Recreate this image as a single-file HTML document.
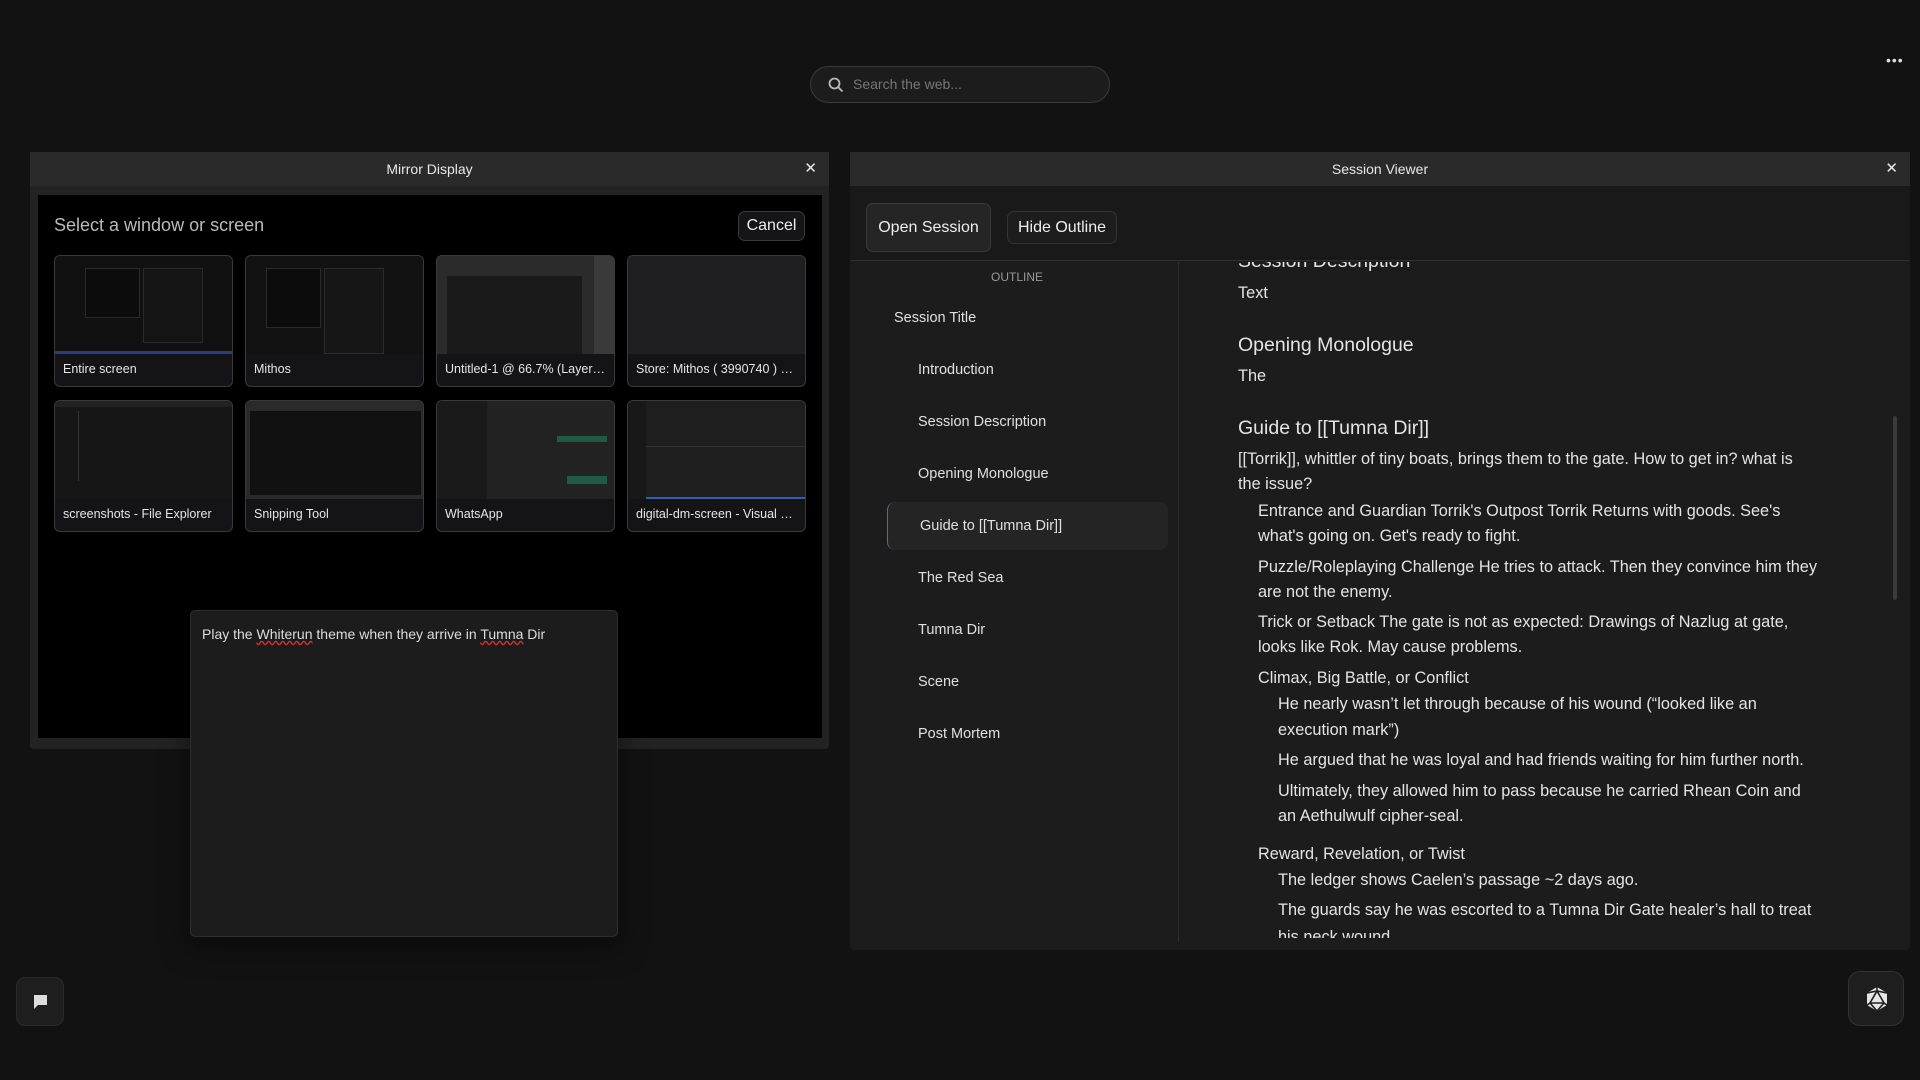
<!DOCTYPE html>
<html><head><meta charset="utf-8"><style>
*{box-sizing:border-box;margin:0;padding:0}
body{width:1920px;height:1080px;background:#121212;font-family:"Liberation Sans","NanumGothic",sans-serif;color:#ddd;position:relative;overflow:hidden}
.a{position:absolute;white-space:nowrap}
.search{left:810px;top:66px;width:300px;height:37px;border:1px solid #3a3a3a;border-radius:19px;background:#1c1c1c}
.panel{background:#1d1d1d;border-radius:4px}
.hdr{height:34px;background:#2a2a2a;text-align:center;line-height:34px;font-size:14px;color:#e8e8e8}
.thumb{position:absolute;width:179px;height:132px;border:1px solid #3a3a3a;border-radius:6px;background:#141416;overflow:hidden}
.thumb .img{position:absolute;left:0;top:0;right:0;height:98px;background:#1a1a1c}
.thumb .lbl{position:absolute;left:8px;top:106px;font-size:12.5px;color:#e6e6e6}
.ol{position:absolute;font-size:14.5px;color:#e0e0e0}
.t{position:absolute;white-space:nowrap;font-size:16.3px;color:#e4e4e4}
.h{font-size:19.5px}
</style></head><body>
<div class="a search"><svg style="position:absolute;left:17px;top:10px" width="16" height="16" viewBox="0 0 16 16"><circle cx="6.5" cy="6.5" r="5" stroke="#bbb" stroke-width="1.8" fill="none"/><path d="M10 10l4.5 4.5" stroke="#bbb" stroke-width="1.8"/></svg><span style="position:absolute;left:42px;top:9px;font-size:14px;color:#777">Search the web...</span></div>
<div class="a" style="left:1886px;top:52px;font-size:14px;color:#ddd;letter-spacing:1px">•••</div>

<div class="a panel" style="left:30px;top:152px;width:799px;height:597px;background:#232323">
<div class="hdr">Mirror Display<span style="position:absolute;right:12px;font-size:15px">✕</span></div>
<div style="position:absolute;left:8px;top:43px;width:784px;height:543px;background:#000"></div>
</div>
<div class="a" style="left:54px;top:215px;font-size:18px;color:#bbb">Select a window or screen</div>
<div class="a" style="left:738px;top:211px;width:67px;height:30px;border:1px solid #3a3a3a;border-radius:7px;background:#151518;color:#eee;font-size:16px;text-align:center;line-height:28px">Cancel</div>

<div class="thumb" style="left:54px;top:255px"><div class="img" style="background:#111"><div style="position:absolute;left:30px;top:12px;width:55px;height:50px;background:#0c0c0c;border:1px solid #2a2a2a"></div><div style="position:absolute;left:88px;top:12px;width:60px;height:75px;background:#141414;border:1px solid #2a2a2a"></div><div style="position:absolute;left:0;bottom:0;width:100%;height:3px;background:#2a3a8a"></div></div><div class="lbl">Entire screen</div></div>
<div class="thumb" style="left:245px;top:255px"><div class="img" style="background:#121212"><div style="position:absolute;left:20px;top:12px;width:55px;height:60px;background:#0c0c0c;border:1px solid #2a2a2a"></div><div style="position:absolute;left:78px;top:12px;width:60px;height:86px;background:#161616;border:1px solid #2a2a2a"></div></div><div class="lbl">Mithos</div></div>
<div class="thumb" style="left:436px;top:255px"><div class="img" style="background:#2b2b2b"><div style="position:absolute;left:10px;top:20px;width:135px;height:78px;background:#1a1a1a"></div><div style="position:absolute;right:0;top:0;width:20px;height:98px;background:#3a3a3a"></div></div><div class="lbl">Untitled-1 @ 66.7% (Layer…</div></div>
<div class="thumb" style="left:627px;top:255px"><div class="img" style="background:#1f1f22"></div><div class="lbl">Store: Mithos ( 3990740 ) …</div></div>

<div class="thumb" style="left:54px;top:400px"><div class="img" style="background:#161616"><div style="position:absolute;left:0;top:0;width:100%;height:6px;background:#222"></div><div style="position:absolute;left:2px;top:10px;width:22px;height:70px;border-right:1px solid #333"></div></div><div class="lbl">screenshots - File Explorer</div></div>
<div class="thumb" style="left:245px;top:400px"><div class="img" style="background:#2a2a2a"><div style="position:absolute;left:4px;top:10px;width:171px;height:84px;background:#111"></div></div><div class="lbl">Snipping Tool</div></div>
<div class="thumb" style="left:436px;top:400px"><div class="img" style="background:#222"><div style="position:absolute;left:0;top:0;width:50px;height:98px;background:#1a1a1a"></div><div style="position:absolute;left:120px;top:35px;width:50px;height:6px;background:#1f5a44"></div><div style="position:absolute;left:130px;top:75px;width:40px;height:8px;background:#1f5a44"></div></div><div class="lbl">WhatsApp</div></div>
<div class="thumb" style="left:627px;top:400px"><div class="img" style="background:#1e1e1e;border-bottom:2px solid #2f5fb0"><div style="position:absolute;left:0;top:0;width:18px;height:98px;background:#181818"></div><div style="position:absolute;left:18px;top:45px;width:160px;height:1px;background:#333"></div></div><div class="lbl">digital-dm-screen - Visual …</div></div>

<div class="a" style="left:190px;top:610px;width:428px;height:327px;background:#1c1c1c;border:1px solid #2e2e2e;border-radius:5px;box-shadow:0 8px 30px rgba(0,0,0,.5)">
<div style="position:absolute;left:11px;top:15px;font-size:14px;color:#ddd">Play the <span style="text-decoration:underline wavy #c33">Whiterun</span> theme when they arrive in <span style="text-decoration:underline wavy #c33">Tumna</span> Dir</div>
</div>

<div class="a panel" style="left:850px;top:152px;width:1060px;height:798px;background:#1c1c1c">
<div class="hdr">Session Viewer<span style="position:absolute;right:12px;font-size:15px">✕</span></div>
<div style="position:absolute;left:0;top:34px;width:100%;height:75px;background:#191919;border-bottom:1px solid #2e2e2e"></div>
<div style="position:absolute;left:328px;top:110px;width:1px;height:680px;background:#2c2c2c"></div>
</div>
<div class="a" style="left:866px;top:203px;width:125px;height:49px;border:1px solid #3a3a3a;border-radius:7px;background:#252525;color:#eee;font-size:16px;text-align:center;line-height:47px">Open Session</div>
<div class="a" style="left:1007px;top:211px;width:110px;height:33px;border:1px solid #333;border-radius:7px;background:#1d1d1d;color:#eee;font-size:16px;text-align:center;line-height:31px">Hide Outline</div>

<div class="ol" style="left:991px;top:270px;font-size:12px;color:#999">OUTLINE</div>
<div class="ol" style="left:894px;top:310px">Session Title</div>
<div class="ol" style="left:918px;top:362px">Introduction</div>
<div class="ol" style="left:918px;top:414px">Session Description</div>
<div class="ol" style="left:918px;top:466px">Opening Monologue</div>
<div class="a" style="left:887px;top:502px;width:281px;height:48px;background:#242424;border-left:1px solid #5a6a90;border-radius:8px"></div>
<div class="ol" style="left:920px;top:518px">Guide to [[Tumna Dir]]</div>
<div class="ol" style="left:918px;top:570px">The Red Sea</div>
<div class="ol" style="left:918px;top:622px">Tumna Dir</div>
<div class="ol" style="left:918px;top:674px">Scene</div>
<div class="ol" style="left:918px;top:726px">Post Mortem</div>

<div class="a" style="left:1180px;top:262px;width:700px;height:676px;overflow:hidden">
<div class="t h" style="left:58px;top:-12px">Session Description</div>
<div class="t" style="left:58px;top:22px">Text</div>
<div class="t h" style="left:58px;top:72px">Opening Monologue</div>
<div class="t" style="left:58px;top:105px">The</div>
<div class="t h" style="left:58px;top:155px">Guide to [[Tumna Dir]]</div>
<div class="t" style="left:58px;top:188px">[[Torrik]], whittler of tiny boats, brings them to the gate. How to get in? what is</div>
<div class="t" style="left:58px;top:213px">the issue?</div>
<div class="t" style="left:78px;top:240px">Entrance and Guardian Torrik's Outpost Torrik Returns with goods. See's</div>
<div class="t" style="left:78px;top:265px">what's going on. Get's ready to fight.</div>
<div class="t" style="left:78px;top:296px">Puzzle/Roleplaying Challenge He tries to attack. Then they convince him they</div>
<div class="t" style="left:78px;top:321px">are not the enemy.</div>
<div class="t" style="left:78px;top:351px">Trick or Setback The gate is not as expected: Drawings of Nazlug at gate,</div>
<div class="t" style="left:78px;top:376px">looks like Rok. May cause problems.</div>
<div class="t" style="left:78px;top:407px">Climax, Big Battle, or Conflict</div>
<div class="t" style="left:98px;top:433px">He nearly wasn’t let through because of his wound (“looked like an</div>
<div class="t" style="left:98px;top:459px">execution mark”)</div>
<div class="t" style="left:98px;top:489px">He argued that he was loyal and had friends waiting for him further north.</div>
<div class="t" style="left:98px;top:520px">Ultimately, they allowed him to pass because he carried Rhean Coin and</div>
<div class="t" style="left:98px;top:545px">an Aethulwulf cipher-seal.</div>
<div class="t" style="left:78px;top:583px">Reward, Revelation, or Twist</div>
<div class="t" style="left:98px;top:609px">The ledger shows Caelen’s passage ~2 days ago.</div>
<div class="t" style="left:98px;top:639px">The guards say he was escorted to a Tumna Dir Gate healer’s hall to treat</div>
<div class="t" style="left:98px;top:666px">his neck wound.</div>
</div>
<div class="a" style="left:1893px;top:416px;width:4px;height:184px;background:#3a3a3a;border-radius:2px"></div>

<div class="a" style="left:16px;top:977px;width:48px;height:49px;background:#1e1e1e;border:1px solid #2a2a2a;border-radius:9px"><svg style="position:absolute;left:16px;top:16px" width="15" height="16" viewBox="0 0 15 16"><path d="M1 1h13v10H5l-4 4z" fill="#ddd"/></svg></div>
<div class="a" style="left:1848px;top:971px;width:56px;height:55px;background:#1e1e1e;border:1px solid #333;border-radius:12px">
<svg style="position:absolute;left:15px;top:14px" width="26" height="26" viewBox="0 0 26 26"><path d="M13 1L23 7v12L13 25 3 19V7z" fill="#e6e6e6"/><path d="M13 5L20 17H6z M13 1v4 M3 7l10-2 10 2 M6 17L3 19 M20 17l3 2 M6 17l7 8 7-8" stroke="#1e1e1e" stroke-width="1.6" fill="none"/></svg></div>
</body></html>
